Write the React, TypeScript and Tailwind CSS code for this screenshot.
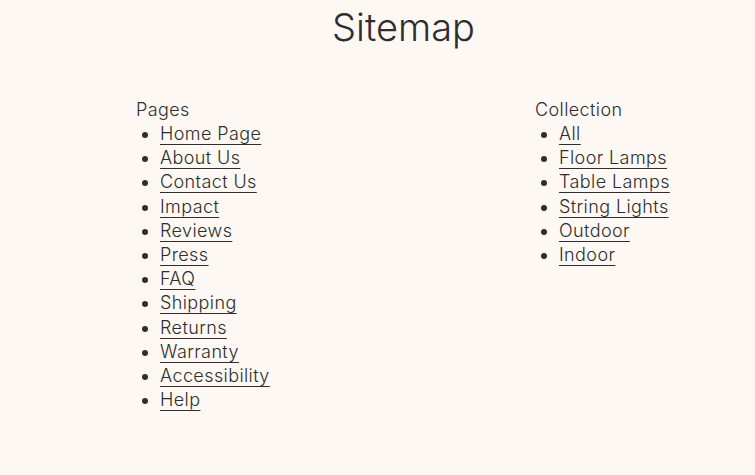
const pages = ['Home Page', 'About Us', 'Contact Us', 'Impact', 'Reviews', 'Press', 'FAQ', 'Shipping', 'Returns', 'Warranty', 'Accessibility', 'Help'];
const collections = ['All', 'Floor Lamps', 'Table Lamps', 'String Lights', 'Outdoor', 'Indoor'];

function LinkList({ title, items }: { title: string; items: string[] }) {
  return (
    <div>
      <h2 className="text-[18px] leading-[24px]">{title}</h2>
      <ul className="list-disc pl-6 text-[18px] leading-[24.2px]">
        {items.map((item) => (
          <li key={item}>
            <a href="#" className="underline underline-offset-[4px] decoration-1">
              {item}
            </a>
          </li>
        ))}
      </ul>
    </div>
  );
}

export default function App() {
  return (
    <div
      className="min-h-[475px] bg-[#fdf8f4] text-[#2e2e2e] font-light tracking-[0.4px]"
      style={{ fontFamily: 'Inter, "Noto Sans", sans-serif' }}
    >
      <h1 className="pt-[4px] pl-[52px] text-center text-[38px] leading-[46px] tracking-normal">Sitemap</h1>
      <div className="mt-[48px] grid grid-cols-[399px_1fr] pl-[136px]">
        <LinkList title="Pages" items={pages} />
        <LinkList title="Collection" items={collections} />
      </div>
    </div>
  );
}
